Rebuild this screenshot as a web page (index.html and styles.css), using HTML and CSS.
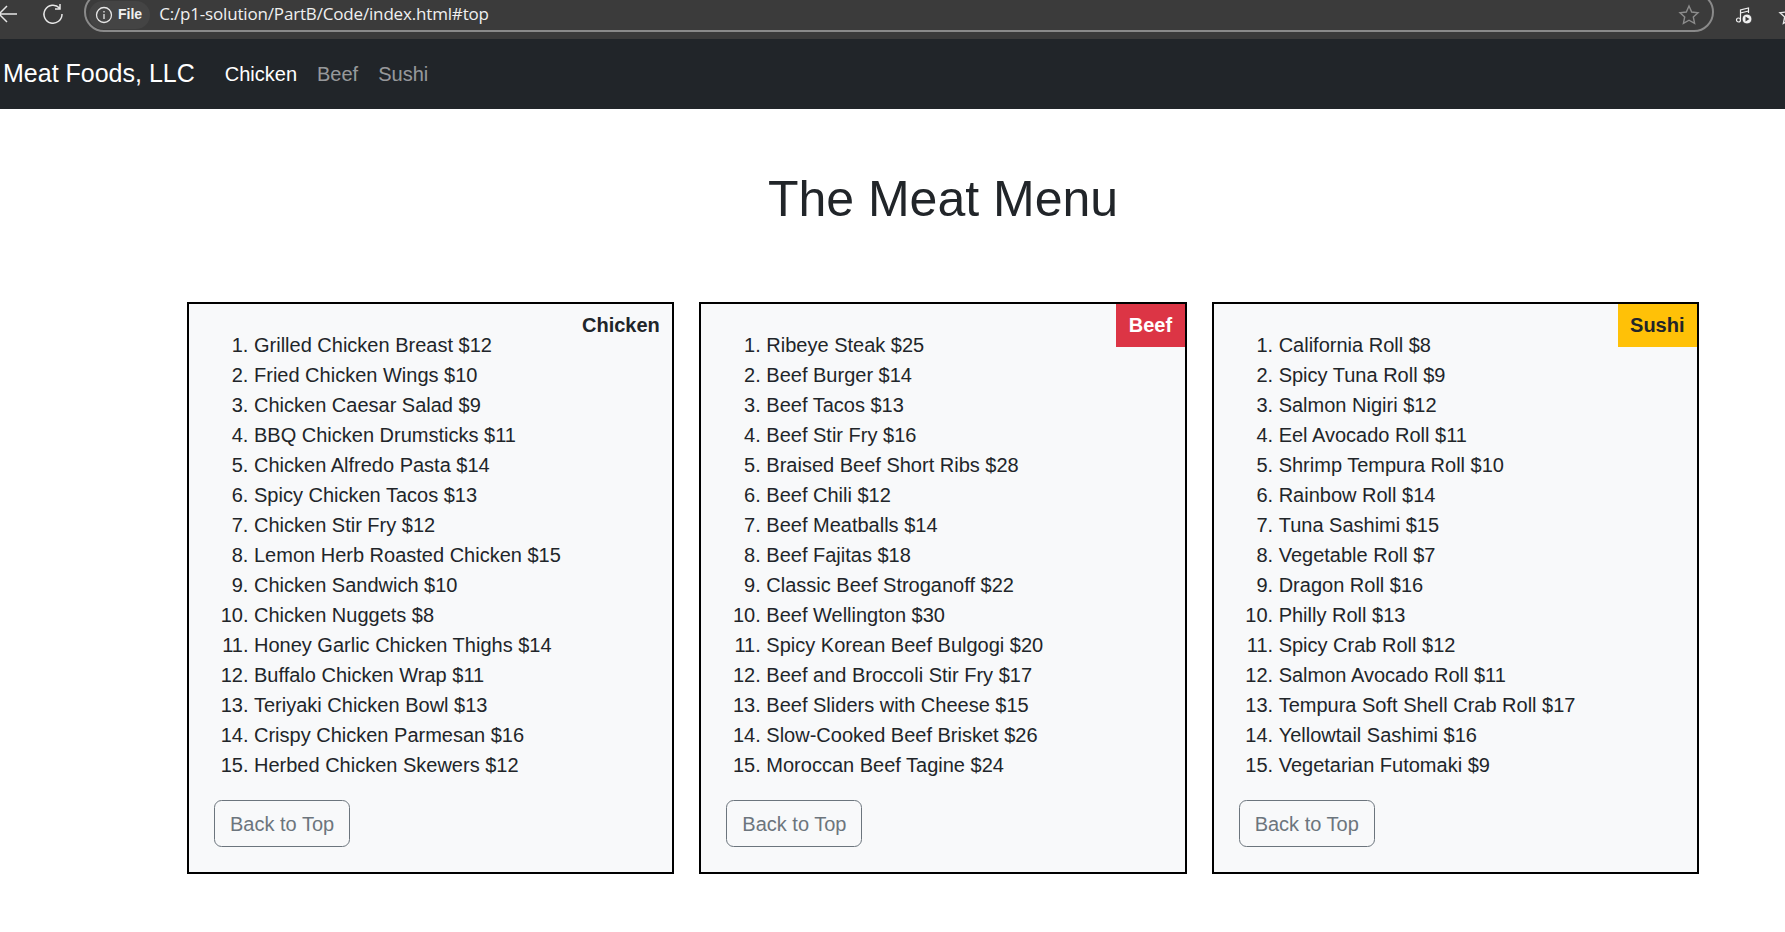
FILE: index.html
```html
<!DOCTYPE html>
<html lang="en">
<head>
    <meta charset="UTF-8">
    <meta name="viewport" content="width=device-width, initial-scale=1.0">
    <title>The Meat Menu</title>
    <link rel="stylesheet" href="styles.css">
</head>
<body>
    <div class="browser-bar">
        <svg class="tool-icon back-icon" viewBox="0 0 20 20"><path d="M19 10H1M9 2l-8 8 8 8"/></svg>
        <svg class="tool-icon reload-icon" viewBox="0 0 22 22"><path d="M17.5 5A9 9 0 1 0 20 11M18 1v5h-5"/></svg>
        <div class="address">
            <div class="site-info">
                <svg class="info-icon" viewBox="0 0 18 18"><circle cx="9" cy="9" r="7.5"/><path d="M9 8v5M9 5v1.6"/></svg>
                <span>File</span>
            </div>
            <span class="url">C:/p1-solution/PartB/Code/index.html#top</span>
            <svg class="star-icon" viewBox="0 0 22 22"><path d="M11 2l2.7 6 6.3.7-4.7 4.3 1.3 6.4L11 16.2 5.4 19.4l1.3-6.4L2 8.7 8.3 8z"/></svg>
        </div>
        <svg class="music-icon" viewBox="0 0 18 18"><circle cx="3.5" cy="14" r="2"/><path d="M5.5 14V4l8-2v5M5.5 7l8-2"/><circle class="play-disc" cx="12" cy="13" r="5"/><path class="play-mark" d="M10.5 10.5v5l4-2.5z"/></svg>
        <svg class="star-icon star-cut" viewBox="0 0 22 22"><path d="M11 2l2.7 6 6.3.7-4.7 4.3 1.3 6.4L11 16.2 5.4 19.4l1.3-6.4L2 8.7 8.3 8z"/></svg>
    </div>

    <nav class="navbar">
        <a class="brand" href="#top">Meat Foods, LLC</a>
        <a class="nav-link active" href="#chicken">Chicken</a>
        <a class="nav-link" href="#beef">Beef</a>
        <a class="nav-link" href="#sushi">Sushi</a>
    </nav>

    <main class="content">
        <h1>The Meat Menu</h1>
        <div class="menu-row">
            <section class="menu-card" id="chicken">
                <div class="label">Chicken</div>
                <ol>
                    <li>Grilled Chicken Breast $12</li>
                    <li>Fried Chicken Wings $10</li>
                    <li>Chicken Caesar Salad $9</li>
                    <li>BBQ Chicken Drumsticks $11</li>
                    <li>Chicken Alfredo Pasta $14</li>
                    <li>Spicy Chicken Tacos $13</li>
                    <li>Chicken Stir Fry $12</li>
                    <li>Lemon Herb Roasted Chicken $15</li>
                    <li>Chicken Sandwich $10</li>
                    <li>Chicken Nuggets $8</li>
                    <li>Honey Garlic Chicken Thighs $14</li>
                    <li>Buffalo Chicken Wrap $11</li>
                    <li>Teriyaki Chicken Bowl $13</li>
                    <li>Crispy Chicken Parmesan $16</li>
                    <li>Herbed Chicken Skewers $12</li>
                </ol>
                <a class="top-btn" href="#top">Back to Top</a>
            </section>
            <section class="menu-card" id="beef">
                <div class="label label-beef">Beef</div>
                <ol>
                    <li>Ribeye Steak $25</li>
                    <li>Beef Burger $14</li>
                    <li>Beef Tacos $13</li>
                    <li>Beef Stir Fry $16</li>
                    <li>Braised Beef Short Ribs $28</li>
                    <li>Beef Chili $12</li>
                    <li>Beef Meatballs $14</li>
                    <li>Beef Fajitas $18</li>
                    <li>Classic Beef Stroganoff $22</li>
                    <li>Beef Wellington $30</li>
                    <li>Spicy Korean Beef Bulgogi $20</li>
                    <li>Beef and Broccoli Stir Fry $17</li>
                    <li>Beef Sliders with Cheese $15</li>
                    <li>Slow-Cooked Beef Brisket $26</li>
                    <li>Moroccan Beef Tagine $24</li>
                </ol>
                <a class="top-btn" href="#top">Back to Top</a>
            </section>
            <section class="menu-card" id="sushi">
                <div class="label label-sushi">Sushi</div>
                <ol>
                    <li>California Roll $8</li>
                    <li>Spicy Tuna Roll $9</li>
                    <li>Salmon Nigiri $12</li>
                    <li>Eel Avocado Roll $11</li>
                    <li>Shrimp Tempura Roll $10</li>
                    <li>Rainbow Roll $14</li>
                    <li>Tuna Sashimi $15</li>
                    <li>Vegetable Roll $7</li>
                    <li>Dragon Roll $16</li>
                    <li>Philly Roll $13</li>
                    <li>Spicy Crab Roll $12</li>
                    <li>Salmon Avocado Roll $11</li>
                    <li>Tempura Soft Shell Crab Roll $17</li>
                    <li>Yellowtail Sashimi $16</li>
                    <li>Vegetarian Futomaki $9</li>
                </ol>
                <a class="top-btn" href="#top">Back to Top</a>
            </section>
        </div>
    </main>
</body>
</html>
```
FILE: styles.css
```css
* {
    box-sizing: border-box;
    margin: 0;
    padding: 0;
}

body {
    font-family: "Liberation Sans", Arial, sans-serif;
    font-size: 20px;
    line-height: 1.5;
    color: #212529;
    background-color: white;
    overflow-x: hidden;
}

a {
    text-decoration: none;
}

/* browser window chrome */
.browser-bar {
    display: flex;
    align-items: flex-end;
    height: 39px;
    padding-bottom: 7px;
    background-color: #3b3b3b;
    overflow: hidden;
}

.tool-icon {
    fill: none;
    stroke: #e6e6e6;
    stroke-width: 1.5;
    flex: none;
    align-self: flex-start;
}

.back-icon {
    width: 20px;
    height: 20px;
    margin: 4px 0 0 -2px;
}

.reload-icon {
    width: 22px;
    height: 22px;
    margin: 3px 0 0 24px;
}

.address {
    display: flex;
    align-items: center;
    flex: none;
    width: 1630px;
    height: 40px;
    margin-left: 20px;
    padding: 5px 12px 0 3px;
    border: 2px solid #8a8a8a;
    border-radius: 20px;
}

.site-info {
    display: flex;
    align-items: center;
    gap: 5px;
    height: 28px;
    padding: 0 8px 0 6px;
    border-radius: 14px;
    background-color: #444444;
    color: #f0f0f0;
    font-size: 14px;
    font-weight: bold;
}

.info-icon {
    width: 18px;
    height: 18px;
    fill: none;
    stroke: #e6e6e6;
    stroke-width: 1.3;
}

.url {
    flex: 1;
    margin: 0 0 2px 9px;
    color: #f0f0f0;
    font-family: "Open Sans", sans-serif;
    font-size: 17px;
    letter-spacing: -0.17px;
}

.star-icon {
    width: 22px;
    height: 22px;
    fill: none;
    stroke: #8c8c8c;
    stroke-width: 1.4;
    flex: none;
}

.music-icon {
    width: 18px;
    height: 18px;
    margin: 6px 0 0 21px;
    align-self: flex-start;
    flex: none;
    fill: none;
    stroke: #f0f0f0;
    stroke-width: 1.2;
}

.music-icon .play-disc {
    fill: #f0f0f0;
    stroke: #3b3b3b;
    stroke-width: 1;
}

.music-icon .play-mark {
    fill: #3b3b3b;
    stroke: none;
}

.star-cut {
    align-self: flex-start;
    margin: 4px 0 0 25px;
    stroke: #e6e6e6;
}

/* site nav */
.navbar {
    display: flex;
    align-items: center;
    height: 70px;
    padding-left: 3px;
    background-color: #212529;
}

.brand {
    margin-right: 20px;
    font-size: 25px;
    color: white;
}

.nav-link {
    padding: 10px;
    color: rgba(255, 255, 255, 0.55);
}

.nav-link.active {
    color: white;
}

.content {
    padding: 0 86px 0 187px;
}

h1 {
    margin: 60px 0 73px;
    font-size: 50px;
    font-weight: 400;
    line-height: 1.2;
    text-align: center;
}

.menu-row {
    display: grid;
    grid-template-columns: repeat(3, 1fr);
    gap: 25px;
}

.menu-card {
    position: relative;
    padding: 26px 25px 25px;
    background-color: #f8f9fa;
    border: 2px solid black;
}

.menu-card ol {
    margin-bottom: 20px;
    padding-left: 40px;
}

.label {
    position: absolute;
    top: 0;
    right: 0;
    padding: 6.25px 12.5px;
    font-weight: bold;
}

.label-beef {
    background-color: #dc3545;
    color: white;
}

.label-sushi {
    background-color: #ffc107;
}

.top-btn {
    display: inline-block;
    padding: 7.5px 15px;
    color: #6c757d;
    border: 1px solid #6c757d;
    border-radius: 7.5px;
}
```
